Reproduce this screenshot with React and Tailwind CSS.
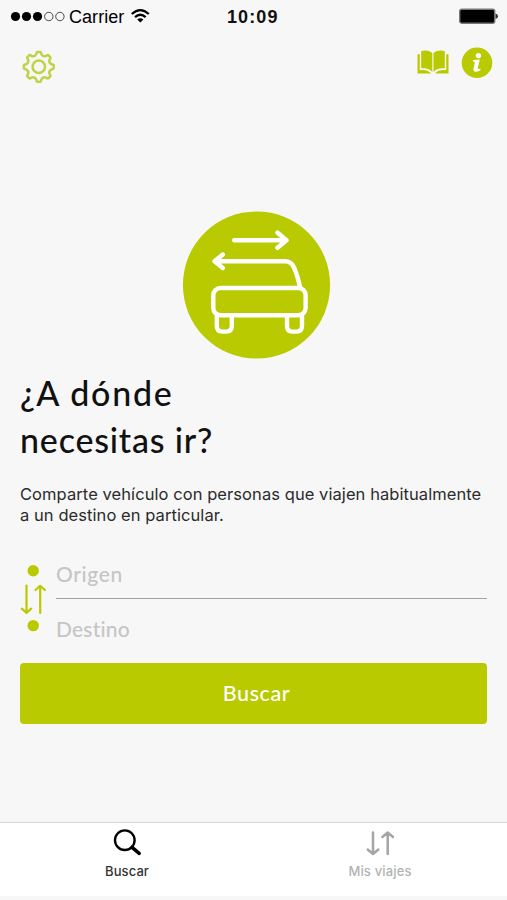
import React from "react";

const SANS = "font-['Inter','Liberation_Sans',sans-serif]";
const HUMANIST = "font-['Lato','Open_Sans',sans-serif]";
const HELVETICA = "font-['Liberation_Sans',Arial,sans-serif]";

// Outline of an eight-toothed cog centred on the origin.
function cogPath() {
  const pt = (r, deg) => {
    const a = ((deg - 90) * Math.PI) / 180;
    return `${(r * Math.cos(a)).toFixed(2)} ${(r * Math.sin(a)).toFixed(2)}`;
  };
  let d = `M${pt(15, -6)}`;
  for (let i = 0; i < 8; i++) {
    const a = i * 45;
    d += `L${pt(15, a + 6)}Q${pt(14.8, a + 9)} ${pt(13, a + 11)}`;
    d += `Q${pt(10.4, a + 22.5)} ${pt(13, a + 34)}`;
    d += `Q${pt(14.8, a + 36)} ${pt(15, a + 39)}`;
  }
  return d + "Z";
}

function StatusBar() {
  return (
    <div className={`${HELVETICA} flex h-[33px] w-full items-start text-black`}>
      <div className="flex w-[227px] items-start pl-[10px]">
        <svg className="mt-[11px]" width="56" height="11" viewBox="0 0 56 11">
          <circle cx="5.5" cy="5.5" r="4.6" />
          <circle cx="16.5" cy="5.5" r="4.6" />
          <circle cx="27.5" cy="5.5" r="4.6" />
          <circle cx="38.8" cy="5.5" r="4.2" fill="none" stroke="#333" strokeWidth="0.9" />
          <circle cx="49.9" cy="5.5" r="4.2" fill="none" stroke="#333" strokeWidth="0.9" />
        </svg>
        <span className="mt-[5px] ml-[3px] w-[56px] whitespace-nowrap text-[18px] leading-6 tracking-[0.05px]">Carrier</span>
        <svg className="mt-[8px] ml-[5px]" width="21" height="16" viewBox="0 0 21 16">
          <g fill="none" stroke="#000" strokeWidth="2.3">
            <path d="M1.8 6Q10.3 -1.8 18.8 6" />
            <path d="M5 9.2Q10.3 4.4 15.6 9.2" />
          </g>
          <path d="M7.2 11.5Q10.3 9 13.4 11.5L10.3 14.6Z" />
        </svg>
      </div>
      <span className="mt-[5px] w-[60px] whitespace-nowrap text-[18px] leading-6 font-bold tracking-[1.1px] text-[#111]">10:09</span>
      <svg className="mt-[8px] ml-auto mr-[8px]" width="40" height="17" viewBox="0 0 40 17">
        <rect x="0.7" y="1.2" width="35" height="14" rx="2" fill="#000" stroke="#777" strokeWidth="1.4" />
        <path d="M36.5 5.5Q39 6 39 8.2T36.5 11Z" fill="#333" />
      </svg>
    </div>
  );
}

function TopActions() {
  return (
    <div className="flex h-[177px] items-start pr-[14px] pl-[21px]">
      <svg className="mt-[16px]" width="36" height="36" viewBox="-17.8 -17.8 36 36" fill="none" stroke="#c1d345" strokeWidth="2.5">
        <path d={cogPath()} strokeLinejoin="round" />
        <circle r="6.2" />
      </svg>
      <svg className="mt-[16px] ml-auto" width="32" height="26" viewBox="0 0 32 26" fill="#b9ca00">
        <path d="M15.3 3.9C12.5 1.3 8 .8 4.2 2V19.6C8.4 18.7 12.5 19.6 15.3 23Z" />
        <path d="M16.5 3.9C19.3 1.3 24 .8 27.8 2V19.6C23.6 18.7 19.3 19.6 16.5 23Z" />
        <path d="M.5 5.2H2.8V21.3C7 20.4 11 21 14.2 24.4H.5Z" />
        <path d="M31.5 5.2H29.2V21.3C25 20.4 21 21 17.8 24.4H31.5Z" />
      </svg>
      <svg className="mt-[14px] ml-[12px]" width="32" height="32" viewBox="0 0 32 32">
        <circle cx="16" cy="15.7" r="15.3" fill="#b9ca00" />
        <g fill="#fff">
          <circle cx="17.4" cy="8.6" r="2.7" />
          <path d="M12 13.1L18.8 12.5L16.8 21Q16.4 22.8 19.5 21.4V23Q17.2 25 14.3 24.7Q11.9 24.2 12.5 21.4L13.8 15.6Q14 14.6 12 14.6Z" />
        </g>
      </svg>
    </div>
  );
}

function CarBadge() {
  return (
    <svg className="ml-[182px] block" width="149" height="149" viewBox="182 210 149 149">
      <circle cx="256.5" cy="285" r="73.6" fill="#b9ca00" />
      <g fill="none" stroke="#fff" strokeWidth="4.4" strokeLinecap="round" strokeLinejoin="round">
        <path d="M234.2 240.3H286M277.5 232.7L286.5 240.3L277.5 247.8" />
        <path d="M222.8 254.5L214.5 261.3L222.8 268M215 261.3H285Q291.3 261.3 294 267.5Q297.5 275.5 300 287" />
        <rect x="213.3" y="288" width="92.3" height="27.2" rx="7.2" />
        <path d="M216.8 316V326Q216.8 331.6 222.2 331.6H226.2Q231.8 331.6 231.8 326V316" />
        <path d="M287 316V326Q287 331.6 292.4 331.6H296.4Q302 331.6 302 326V316" />
      </g>
    </svg>
  );
}

function RouteFields() {
  return (
    <div className="flex h-[110px] px-5">
      <svg className="shrink-0" width="36" height="110" viewBox="20 550 36 110">
        <circle cx="33.2" cy="570.8" r="5.7" fill="#b9ca00" />
        <circle cx="33.2" cy="625.6" r="5.7" fill="#b9ca00" />
        <path
          d="M26.5 585.5V612.5M21.8 608.7L26.5 612.8L31.2 608.7M40.2 613V586M35.5 590L40.2 585.8L44.9 590"
          fill="none" stroke="#b9ca00" strokeWidth="2.2" strokeLinecap="round" strokeLinejoin="round"
        />
      </svg>
      <div className={`${HUMANIST} flex-1 text-[21px] font-medium text-[#c5c5c5]`}>
        <div className="h-[49px] border-b border-[#a2a3a2] pt-[11px] leading-[26px] tracking-[0.6px]">Origen</div>
        <div className="pt-[17px] leading-[26px] tracking-[0.2px]">Destino</div>
      </div>
    </div>
  );
}

function TabBar() {
  return (
    <div className={`${SANS} mt-auto flex h-[78px] border-t border-[#d4d4d4] bg-white text-[13px] leading-4 shadow-[inset_0_-4px_0_#f7f7f7]`}>
      <div className="flex w-[254px] flex-col items-center text-[#333]">
        <svg className="mt-[5px]" width="30" height="30" viewBox="112 828 30 30" fill="none" stroke="#000" strokeLinecap="round">
          <circle cx="124.8" cy="840.2" r="9.8" strokeWidth="2.4" />
          <path d="M132 847.3L139.2 853.4" strokeWidth="3.5" />
        </svg>
        <span className="mt-[5px] font-medium tracking-[0.1px]">Buscar</span>
      </div>
      <div className="flex w-[252px] flex-col items-center text-[#b2b2b2]">
        <svg className="mt-[5px]" width="30" height="30" viewBox="365 828 30 30" fill="none" stroke="#a5a5a5" strokeWidth="2.5" strokeLinecap="round" strokeLinejoin="round">
          <path d="M373 832.5V854M367.7 849.5L373 854L378.3 849.5M387.7 854V832.5M382.4 837L387.7 832.5L393 837" />
        </svg>
        <span className="mt-[5px] font-medium tracking-[0.15px]">Mis viajes</span>
      </div>
    </div>
  );
}

export default function App() {
  return (
    <main className="flex h-[900px] w-[507px] flex-col overflow-hidden bg-[#f7f7f7]">
      <StatusBar />
      <TopActions />
      <CarBadge />
      <h1 className={`${HUMANIST} mt-[10px] h-[94px] pl-[20px] text-[34px] leading-[47px] font-medium whitespace-nowrap text-[#111]`}>
        <span className="block tracking-[1.7px]">¿A dónde</span>
        <span className="block tracking-[0.8px]">necesitas ir?</span>
      </h1>
      <p className={`${SANS} mt-[21px] h-[42px] pl-5 text-[16.5px] leading-[21px] tracking-[0.07px] whitespace-nowrap text-[#2b2b2b]`}>
        Comparte vehículo con personas que viajen habitualmente
        <br />
        a un destino en particular.
      </p>
      <div className="mt-[24px]">
        <RouteFields />
      </div>
      <button className={`${HUMANIST} mx-5 mt-[3px] h-[61px] shrink-0 rounded-[4px] bg-[#b9ca00] pb-px pl-[6px] text-[21.5px] font-medium tracking-[0.6px] text-white`}>
        Buscar
      </button>
      <TabBar />
    </main>
  );
}
